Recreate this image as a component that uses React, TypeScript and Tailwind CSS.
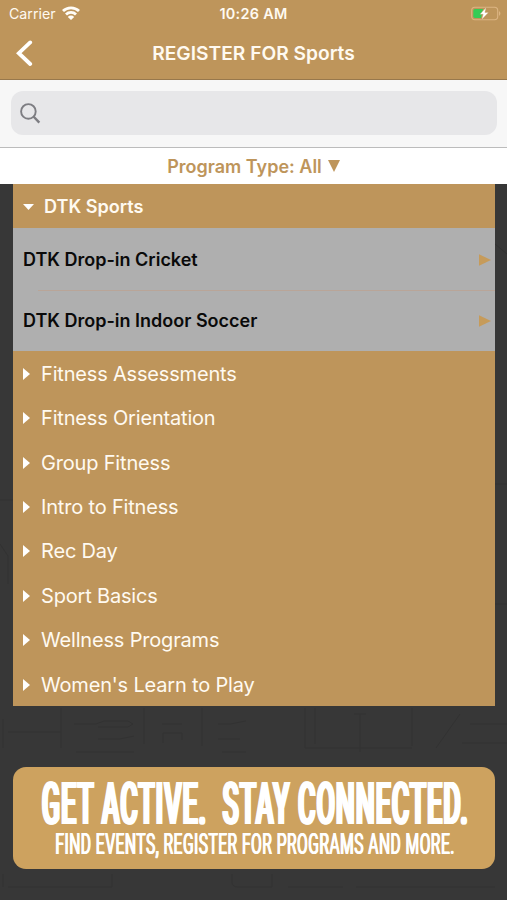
const programs = [
  'Fitness Assessments',
  'Fitness Orientation',
  'Group Fitness',
  'Intro to Fitness',
  'Rec Day',
  'Sport Basics',
  'Wellness Programs',
  "Women's Learn to Play",
];

const sports = ['DTK Drop-in Cricket', 'DTK Drop-in Indoor Soccer'];

function WifiIcon() {
  return (
    <svg className="-mt-px ml-[6px] h-[14px] w-[18px]" viewBox="0 0 18 14" fill="none" stroke="#fffdf8" strokeWidth="2.8">
      <path d="M1 5.1 A11.3 11.3 0 0 1 17 5.1" />
      <path d="M4 8.5 A7.1 7.1 0 0 1 14 8.5" />
      <path d="M9 14 L5.8 10.9 A4.5 4.5 0 0 1 12.2 10.9 Z" fill="#fffdf8" stroke="none" />
    </svg>
  );
}

function BatteryIcon() {
  return (
    <svg className="-mt-[2px] h-[15px] w-[30px]" viewBox="0 0 30 15" fill="none">
      <rect x="0.7" y="1.2" width="26" height="12.6" rx="3.2" stroke="#dcb583" strokeWidth="1.1" />
      <path d="M28 5.2 C29.8 5.8 29.8 9 28 9.7 Z" fill="#dcb583" />
      <path d="M4 3 H12 L10 12 H4 Q2.3 12 2.3 10.3 V4.7 Q2.3 3 4 3 Z" fill="#33cc55" />
      <path d="M15.2 1.4 L8.9 8.3 H12.2 L10.7 13.6 L17.5 6.4 H13.9 Z" fill="#fff" stroke="#be955b" strokeWidth="0.3" />
    </svg>
  );
}

// Faint line work behind the list
function Backdrop() {
  return (
    <svg className="absolute inset-0 h-full w-full" viewBox="0 0 507 716" fill="none" stroke="#323232">
      <path d="M3 535 V564 M8 548 H61 M61 524 V564 M144 524 V560 M202 524 V562" />
      <path d="M74 540 H96 L104 537 H128 L133 540 L128 543 H98 M98 555 H120 L134 552 M76 568 H134" />
      <path d="M163 559 V549 H182 V556 M162 540 H182 M218 540 H230 L246 537 M218 555 H240 M222 568 H246" />
      <path d="M305 524 V564 M315 524 V560 M360 530 V568 M354 530 H366 M412 524 V562 M305 564 H412 M436 564 L460 530 M462 559 H507 M470 540 H507" />
      <path d="M3 690 V703 M8 703 H112 V690 M232 690 V698 Q232 703 238 703 H272 V690 M288 703 H343 M356 703 H495" />
      <path d="M0 316 H13 M0 360 L8 372 V400 M495 300 H507 M495 60 L507 70 M495 420 H507" />
    </svg>
  );
}

export default function App() {
  return (
    <div className="flex h-[900px] w-[507px] flex-col overflow-hidden bg-[#373737] font-['Inter',sans-serif]">
      {/* Header */}
      <header className="h-[80px] border-b border-[#98784c] bg-[#be955b] text-[#fffaf1]">
        <div className="grid h-7 grid-cols-3 items-center pr-[6px] pl-[9px]">
          <div className="flex items-center">
            <span className="text-[14.2px]">Carrier</span>
            <WifiIcon />
          </div>
          <span className="-mt-px pr-[3px] text-center text-[14.4px] font-semibold tracking-[0.3px]">10:26 AM</span>
          <div className="flex justify-end">
            <BatteryIcon />
          </div>
        </div>
        <div className="grid h-[50px] grid-cols-[60px_1fr_60px] items-center">
          <button className="pl-[16px]" aria-label="Back">
            <svg className="h-[27px] w-[18px]" viewBox="0 0 18 27" fill="none" stroke="#fff" strokeWidth="3.8">
              <path d="M14.2 2.4 L2.8 13.2 L14.2 24" strokeLinecap="round" />
            </svg>
          </button>
          <h1 className="text-center text-[19.2px] font-semibold whitespace-nowrap">REGISTER FOR Sports</h1>
        </div>
      </header>

      {/* Search */}
      <div className="h-[68px] border-b border-[#bcbcbc] bg-[#f7f7f7] pt-[11px] pr-[10px] pl-[11px]">
        <div className="flex h-[44px] items-center rounded-[12px] bg-[#e7e7e9] pl-[9px]">
          <svg className="h-[21px] w-[21px]" viewBox="0 0 21 21" fill="none" stroke="#7d7d82" strokeWidth="1.9">
            <circle cx="8.4" cy="8.4" r="7.3" />
            <path d="M13.5 13.5 L19.3 19.6" strokeWidth="2.4" />
          </svg>
        </div>
      </div>

      {/* Program type */}
      <button className="flex h-[36px] items-center justify-center bg-white text-[18px] font-semibold text-[#be955b]">
        <span>Program Type: All</span>
        <svg className="ml-[6px] h-[12px] w-[12px]" viewBox="0 0 12 12">
          <path d="M0 0 H12 L6 12 Z" fill="#be955b" />
        </svg>
      </button>

      {/* Program list */}
      <main className="relative flex-1 px-[13px]">
        <Backdrop />
        <div className="relative w-[481.5px]">
          <div className="flex h-[44.4px] items-center bg-[#be955b] pt-px pl-[10px] text-[18.1px] font-semibold text-[#fffaf1]">
            <svg className="mr-[10px] h-[6px] w-[11px]" viewBox="0 0 11 6">
              <path d="M0 0 H11 L5.5 6 Z" fill="#fff" />
            </svg>
            <span>DTK Sports</span>
          </div>
          <ul className="bg-[#afafaf]">
            {sports.map((sport, i) => (
              <li key={sport} className="h-[61.4px]">
                {i > 0 && <div className="-mb-px ml-[25px] h-px bg-[#b9a598]" />}
                <div className="flex h-full items-center justify-between pt-px pr-[4px] pl-[10px]">
                  <span className="text-[18px] font-semibold text-[#0a0a0a]">{sport}</span>
                  <svg className="h-[12px] w-[12px]" viewBox="0 0 12 12">
                    <path d="M0 0.3 L12 6 L0 11.7 Z" fill="#c69b5a" />
                  </svg>
                </div>
              </li>
            ))}
          </ul>
          <ul className="bg-[#be955b] text-[#fffaf1]">
            {programs.map((program) => (
              <li key={program} className="flex h-[44.4px] items-center pt-px pl-[10px] text-[20px] tracking-[-0.18px]">
                <svg className="mr-[11px] h-[12px] w-[7px]" viewBox="0 0 7 12">
                  <path d="M0 0 L7 6 L0 12 Z" fill="#fff" />
                </svg>
                <span>{program}</span>
              </li>
            ))}
          </ul>
        </div>

        {/* Banner */}
        <div className="relative mt-[60.5px] flex h-[102px] w-[481.5px] flex-col items-center overflow-hidden rounded-[13px] bg-[#cda25f] pt-[12px] pl-[3px] font-['Roboto',sans-serif] text-white">
          <div className="shrink-0 scale-x-[0.448] text-[59px] leading-[50px] font-medium tracking-[2.6px] whitespace-pre [text-shadow:1.5px_0_0_#fff,-1.5px_0_0_#fff,3px_0_0_#fff,-3px_0_0_#fff]">
            GET ACTIVE.  STAY CONNECTED.
          </div>
          <div className="shrink-0 scale-x-[0.52] text-[30px] leading-[30px] font-normal tracking-[0.9px] whitespace-pre [text-shadow:1px_0_0_#fff,-1px_0_0_#fff]">
            FIND EVENTS, REGISTER FOR PROGRAMS AND MORE.
          </div>
        </div>
      </main>
    </div>
  );
}
